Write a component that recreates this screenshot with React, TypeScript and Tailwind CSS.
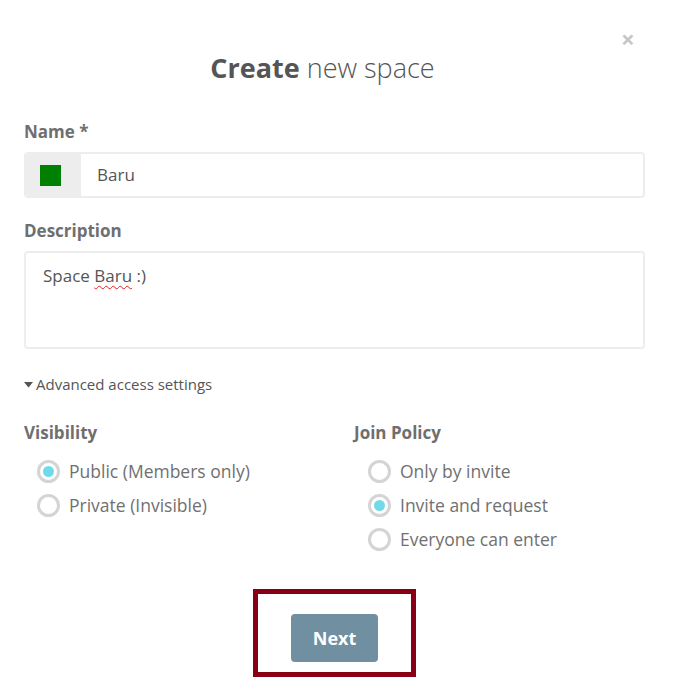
export default function App() {
  return (
    <div className="relative flex w-[682px] h-[697px] flex-col bg-white font-['Open_Sans',sans-serif] pl-[24px] pr-[37px] pt-[48px]">
      <button className="absolute left-[621px] top-[24px] text-[24px] font-bold leading-[30px] text-[#c6c6c6]">
        ×
      </button>

      <h1 className="h-[40px] pr-[24px] text-center text-[27px] leading-[40px] text-[#555]">
        <span className="font-bold">Create</span> <span className="font-light">new space</span>
      </h1>

      <label className="mt-[32px] block text-[17px] font-bold leading-[24px] text-[#6f6f6f]">Name *</label>
      <div className="mt-[8px] flex h-[46px] overflow-hidden rounded-[4px] border-2 border-[#ededed]">
        <div className="flex w-[55px] items-center bg-[#ededed] pl-[14px]">
          <span className="h-[21px] w-[21px] bg-[#008000]" />
        </div>
        <div className="flex flex-1 items-center pl-[16px] text-[17px] text-[#555]">Baru</div>
      </div>

      <label className="mt-[21px] block text-[17px] font-bold leading-[24px] text-[#6f6f6f]">Description</label>
      <div className="mt-[8px] h-[98px] rounded-[4px] border-2 border-[#ededed] px-[17px] pt-[11px] text-[17px] leading-[24px] text-[#555]">
        Space{" "}
        <span className="underline decoration-wavy decoration-[#e02020] decoration-1 underline-offset-[3px]">Baru</span> :)
      </div>

      <div className="mt-[25px] flex h-[20px] items-center gap-[3px] text-[15px] text-[#555]">
        <svg width="9" height="6" viewBox="0 0 9 6" className="mt-[1px]">
          <path d="M0 0h9L4.5 5.5z" fill="#555" />
        </svg>
        Advanced access settings
      </div>

      <div className="mt-[27px] grid grid-cols-[330px_1fr]">
        <RadioGroup
          title="Visibility"
          options={["Public (Members only)", "Private (Invisible)"]}
          checked={0}
          indent="pl-[13px]"
        />
        <RadioGroup
          title="Join Policy"
          options={["Only by invite", "Invite and request", "Everyone can enter"]}
          checked={1}
          indent="pl-[14px]"
        />
      </div>

      <div className="mt-[33px] flex justify-center">
        <div className="flex h-[88px] w-[163px] justify-center border-[5px] border-[#870016] pt-[20px]">
          <button className="h-[48px] w-[87px] rounded-[4px] bg-[#708fa0] text-[18px] font-bold text-white">
            Next
          </button>
        </div>
      </div>
    </div>
  );
}

function RadioGroup({
  title,
  options,
  checked,
  indent,
}: {
  title: string;
  options: string[];
  checked: number;
  indent: string;
}) {
  return (
    <div>
      <div className="text-[17px] font-bold leading-[24px] text-[#6f6f6f]">{title}</div>
      <div className={`mt-[9px] ${indent}`}>
        {options.map((opt, i) => (
          <div key={opt} className="flex h-[34px] items-center gap-[9px] text-[17.5px] text-[#707070]">
            <span className="flex h-[23px] w-[23px] shrink-0 items-center justify-center rounded-full border-[3px] border-[#d4d4d4]">
              {i === checked && <span className="h-[11px] w-[11px] rounded-full bg-[#6fdbe8]" />}
            </span>
            {opt}
          </div>
        ))}
      </div>
    </div>
  );
}
